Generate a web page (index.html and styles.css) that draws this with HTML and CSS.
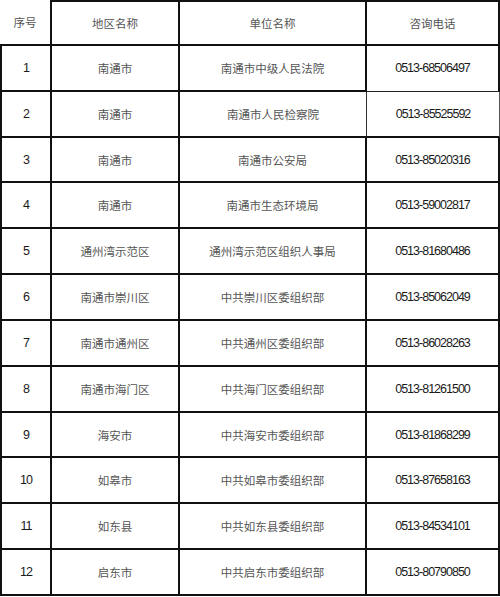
FILE: index.html
```html
<!DOCTYPE html>
<html lang="zh">
<head>
<meta charset="utf-8">
<title>咨询电话</title>
<link rel="stylesheet" href="styles.css">
</head>
<body>
<div class="table">
  <div class="cell head c1 first zh">序号</div>
  <div class="cell head zh">地区名称</div>
  <div class="cell head zh">单位名称</div>
  <div class="cell head zh">咨询电话</div>

  <div class="cell c1 num">1</div><div class="cell zh">南通市</div><div class="cell zh">南通市中级人民法院</div><div class="cell num thinb">0513-68506497</div>
  <div class="cell c1 num">2</div><div class="cell zh">南通市</div><div class="cell zh thinr">南通市人民检察院</div><div class="cell num thinx">0513-85525592</div>
  <div class="cell c1 num">3</div><div class="cell zh">南通市</div><div class="cell zh">南通市公安局</div><div class="cell num">0513-85020316</div>
  <div class="cell c1 num">4</div><div class="cell zh">南通市</div><div class="cell zh">南通市生态环境局</div><div class="cell num">0513-59002817</div>
  <div class="cell c1 num">5</div><div class="cell zh">通州湾示范区</div><div class="cell zh">通州湾示范区组织人事局</div><div class="cell num">0513-81680486</div>
  <div class="cell c1 num">6</div><div class="cell zh">南通市崇川区</div><div class="cell zh">中共崇川区委组织部</div><div class="cell num">0513-85062049</div>
  <div class="cell c1 num">7</div><div class="cell zh">南通市通州区</div><div class="cell zh">中共通州区委组织部</div><div class="cell num">0513-86028263</div>
  <div class="cell c1 num">8</div><div class="cell zh">南通市海门区</div><div class="cell zh">中共海门区委组织部</div><div class="cell num">0513-81261500</div>
  <div class="cell c1 num">9</div><div class="cell zh">海安市</div><div class="cell zh">中共海安市委组织部</div><div class="cell num">0513-81868299</div>
  <div class="cell c1 num">10</div><div class="cell zh">如皋市</div><div class="cell zh">中共如皋市委组织部</div><div class="cell num">0513-87658163</div>
  <div class="cell c1 num">11</div><div class="cell zh">如东县</div><div class="cell zh">中共如东县委组织部</div><div class="cell num">0513-84534101</div>
  <div class="cell c1 num">12</div><div class="cell zh">启东市</div><div class="cell zh">中共启东市委组织部</div><div class="cell num">0513-80790850</div>
</div>
</body>
</html>
```

FILE: styles.css
```css
html, body {
  margin: 0;
  padding: 0;
  background: #ffffff;
}

.table {
  display: grid;
  grid-template-columns: 52px 128px 187px 133px;
  grid-template-rows: 46px repeat(12, 45.83px);
  width: 500px;
}

.cell {
  box-sizing: border-box;
  display: flex;
  align-items: center;
  justify-content: center;
  border-right: 2px solid #111;
  border-bottom: 2px solid #111;
  background: #fff;
  white-space: nowrap;
}

.c1 {
  border-left: 2px solid #111;
}

.head {
  border-top: 2px solid #111;
}

.head.first {
  border-top: none;
  border-left: none;
}

.zh {
  font-family: "Noto Sans CJK SC", "Noto Sans", sans-serif;
  font-size: 11.5px;
  color: #555;
  letter-spacing: 0;
}

.num {
  font-family: "Liberation Sans", Arial, sans-serif;
  font-size: 12.5px;
  color: #1a1a1a;
  letter-spacing: -1px;
}

.thinb {
  border-bottom: 1px solid #222;
}

.thinr {
  border-right: 1px solid #333;
}

.thinx {
  border-right: 1px solid #555;
}
```
